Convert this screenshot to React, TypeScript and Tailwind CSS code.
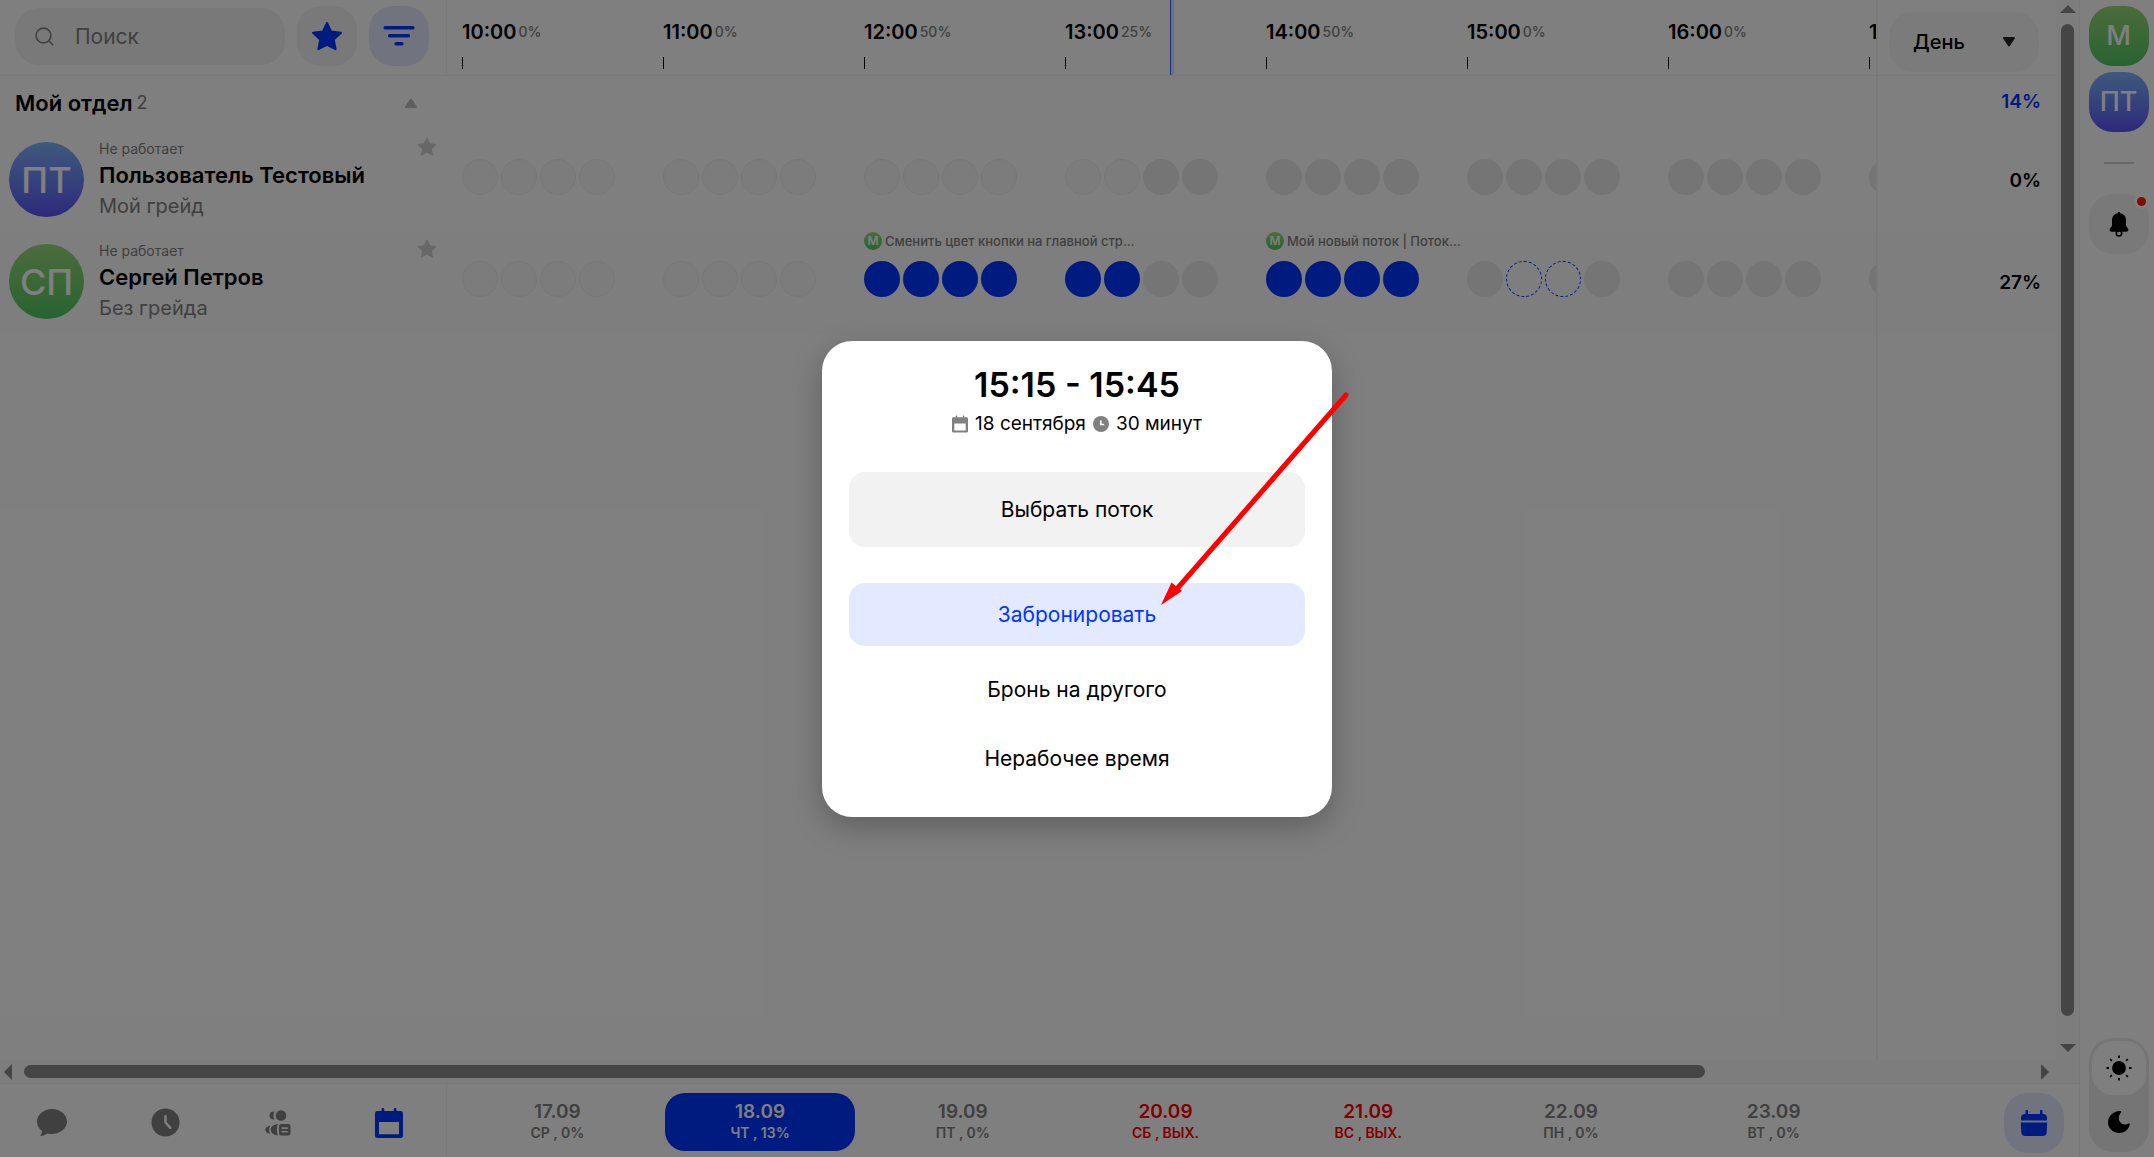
import clsx from 'clsx';
import type { ReactNode } from 'react';

type Cell = 'past' | 'free' | 'busy' | 'picked';

interface Hour {
  time: string;
  load: string;
}

interface Booking {
  hour: number;
  title: string;
}

interface Person {
  initials: string;
  name: string;
  grade: string;
  load: string;
  avatar: string;
  cells: Cell[][];
  bookings: Booking[];
}

const HOURS: Hour[] = [
  { time: '10:00', load: '0%' },
  { time: '11:00', load: '0%' },
  { time: '12:00', load: '50%' },
  { time: '13:00', load: '25%' },
  { time: '14:00', load: '50%' },
  { time: '15:00', load: '0%' },
  { time: '16:00', load: '0%' },
  { time: '17:00', load: '0%' },
];

const PAST: Cell[] = ['past', 'past', 'past', 'past'];
const FREE: Cell[] = ['free', 'free', 'free', 'free'];
const BUSY: Cell[] = ['busy', 'busy', 'busy', 'busy'];

const BLUE_AVATAR = 'bg-linear-to-b from-[#7eb3fb] to-[#5d50f5]';
const GREEN_AVATAR = 'bg-linear-to-b from-[#97d877] to-[#4bc763]';

const PEOPLE: Person[] = [
  {
    initials: 'ПТ',
    name: 'Пользователь Тестовый',
    grade: 'Мой грейд',
    load: '0%',
    avatar: BLUE_AVATAR,
    cells: [PAST, PAST, PAST, ['past', 'past', 'free', 'free'], FREE, FREE, FREE, FREE],
    bookings: [],
  },
  {
    initials: 'СП',
    name: 'Сергей Петров',
    grade: 'Без грейда',
    load: '27%',
    avatar: GREEN_AVATAR,
    cells: [PAST, PAST, BUSY, ['busy', 'busy', 'free', 'free'], BUSY, ['free', 'picked', 'picked', 'free'], FREE, FREE],
    bookings: [
      { hour: 2, title: 'Сменить цвет кнопки на главной стр...' },
      { hour: 4, title: 'Мой новый поток | Поток...' },
    ],
  },
];

const DAYS = [
  { date: '17.09', info: 'СР , 0%' },
  { date: '18.09', info: 'ЧТ , 13%', current: true },
  { date: '19.09', info: 'ПТ , 0%' },
  { date: '20.09', info: 'СБ , ВЫХ.', off: true },
  { date: '21.09', info: 'ВС , ВЫХ.', off: true },
  { date: '22.09', info: 'ПН , 0%' },
  { date: '23.09', info: 'ВТ , 0%' },
];

/* Icons */

function StarIcon({ className }: { className?: string }) {
  return (
    <svg viewBox="0 0 32 30" className={className} fill="currentColor" aria-hidden="true">
      <path
        d="M16 2l4.2 8.6 9.8 1.2-7.200 6.800 1.800 9.600L16 23.800l-8.600 4.400 1.800-9.600-7.200-6.800 9.800-1.200z"
        stroke="currentColor"
        strokeWidth="2"
        strokeLinejoin="round"
      />
    </svg>
  );
}

function SearchIcon() {
  return (
    <svg viewBox="0 0 20 20" className="size-5" fill="none" stroke="currentColor" strokeWidth="1.6" strokeLinecap="round" aria-hidden="true">
      <circle cx="8.500" cy="8.500" r="7.400" />
      <path d="M13.800 13.800l4 4" />
    </svg>
  );
}

function FilterIcon() {
  return (
    <svg viewBox="0 0 32 20" className="h-5 w-8" fill="currentColor" aria-hidden="true">
      <rect x="0.5" y="0" width="31" height="3.4" rx="1.5" />
      <rect x="5" y="8" width="22" height="3.4" rx="1.5" />
      <rect x="11.5" y="16" width="9" height="3.4" rx="1.5" />
    </svg>
  );
}

function CalendarIcon({ className }: { className?: string }) {
  return (
    <svg viewBox="0 0 28 30" className={className} fill="currentColor" fillRule="evenodd" aria-hidden="true">
      <path d="M2.500 3h4V1.400a1.400 1.400 0 0 1 2.800 0V3h9.400V1.400a1.400 1.400 0 0 1 2.800 0V3h4A2.500 2.500 0 0 1 28 5.500v22a2.500 2.500 0 0 1-2.500 2.500h-23A2.500 2.500 0 0 1 0 27.500v-22A2.500 2.500 0 0 1 2.500 3zM4 14v12.200h20V14z" />
    </svg>
  );
}

function SolidCalendarIcon() {
  return (
    <svg viewBox="0 0 28 26" className="h-[26px] w-7" fill="currentColor" aria-hidden="true">
      <path d="M1 10.500V8a4 4 0 0 1 4-4h.5V1a1 1 0 0 1 2.500 0v3h12V1a1 1 0 0 1 2.500 0v3h.5a4 4 0 0 1 4 4v2.500z" />
      <path d="M.8 12.500h26.400L26.700 22a4 4 0 0 1-4 4H5.300a4 4 0 0 1-4-4z" />
    </svg>
  );
}

function ClockIcon({ className }: { className?: string }) {
  return (
    <svg viewBox="0 0 30 30" className={className} aria-hidden="true">
      <circle cx="15" cy="15" r="14.500" fill="currentColor" />
      <path d="M15 8.500V15l5 5.500" fill="none" stroke="white" strokeWidth="2.600" strokeLinecap="round" strokeLinejoin="round" />
    </svg>
  );
}

function SmallClockIcon() {
  return (
    <svg viewBox="0 0 16 16" className="size-4" aria-hidden="true">
      <circle cx="8" cy="8" r="8" fill="currentColor" />
      <path d="M7.800 4.500v4h3.400" fill="none" stroke="white" strokeWidth="1.600" />
    </svg>
  );
}

function ChatIcon() {
  return (
    <svg viewBox="0 0 30 27" className="h-[27px] w-[30px]" fill="currentColor" aria-hidden="true">
      <path d="M15 0c8.300 0 15 5.600 15 12.500S23.300 25 15 25c-1.700 0-3.300-.2-4.800-.6-1.800 1.500-4.400 2.500-7.200 2.400 1.300-1.200 2-2.900 1.900-4.800C1.900 19.700 0 16.300 0 12.500 0 5.600 6.700 0 15 0z" />
    </svg>
  );
}

function TeamIcon() {
  return (
    <svg viewBox="0 0 26 26" className="size-[26px]" fill="currentColor" aria-hidden="true">
      <circle cx="16" cy="5.500" r="5.300" />
      <path d="M9.600 1.800a4 4 0 1 0 0 7.600 7 7 0 0 1 0-7.600z" />
      <path d="M13 14c-4.500.4-7.300 2.700-7.300 5.700s2.800 5.300 7.300 5.700c-.8-1.500-1-3.300-1-5.700s.2-4.200 1-5.700z" />
      <path d="M5.500 15.800C2.300 16 .3 17.600.3 19.700s2 3.700 5.200 4c-2-2.400-2-5.500 0-7.900z" />
      <path fillRule="evenodd" d="M16.500 14H23a2.500 2.500 0 0 1 2.500 2.500V23a2.500 2.500 0 0 1-2.500 2.500h-6.500A2.500 2.500 0 0 1 14 23v-6.500a2.500 2.500 0 0 1 2.500-2.500zm.2 3.300v1.600h6v-1.600zm0 3.700v1.600h6V21z" />
    </svg>
  );
}

function BellIcon() {
  return (
    <svg viewBox="0 0 20 25" className="h-[25px] w-5" fill="currentColor" aria-hidden="true">
      <path d="M10 0c.7 0 1.100.5 1.200 1.300C14.800 1.900 17 4.500 17 8.500v4.800c0 .8.400 1.400 1.200 2.200 1.700 1.700 1.800 4.200-1.200 4.200H3c-3 0-2.900-2.500-1.200-4.200.8-.8 1.200-1.400 1.200-2.200V8.500c0-4 2.200-6.600 5.800-7.200C8.900.5 9.300 0 10 0z" />
      <circle cx="10" cy="21.300" r="2.700" fill="none" stroke="currentColor" strokeWidth="1.600" />
    </svg>
  );
}

function SunIcon() {
  return (
    <svg viewBox="0 0 26 26" className="size-[26px]" fill="currentColor" stroke="currentColor" strokeWidth="1.800" aria-hidden="true">
      <circle cx="13" cy="13" r="6" />
      <path d="M13 .5v2.500M13 23v2.500M.5 13H3M23 13h2.500M4.200 4.200l1.700 1.700M20.100 20.100l1.700 1.700M4.200 21.800l1.700-1.700M20.100 5.900l1.700-1.700" />
    </svg>
  );
}

function MoonIcon() {
  return (
    <svg viewBox="0 0 24 24" className="size-6" fill="currentColor" aria-hidden="true">
      <path d="M13.400 1C7 .8 1 5.800 1 12.300 1 18.300 6 23 12 23c5.200 0 9.600-3.600 10.800-8.600.2-.9-.6-1.300-1.300-.8-4.600 2.900-9.900-.9-9.700-5.800.1-2 1-3.800 2.200-5.200.5-.6.300-1.500-.6-1.600z" />
    </svg>
  );
}

function Triangle({ className }: { className?: string }) {
  return (
    <svg viewBox="0 0 12 10" className={className} fill="currentColor" stroke="currentColor" strokeWidth="2" strokeLinejoin="round" aria-hidden="true">
      <path d="M6 1.500L11 9H1z" />
    </svg>
  );
}

function ScrollArrow({ className }: { className?: string }) {
  return (
    <svg viewBox="0 0 16 8" className={clsx('h-2 w-4 text-[#8b8b8b]', className)} fill="currentColor" aria-hidden="true">
      <path d="M8 0l8 8H0z" />
    </svg>
  );
}

/* Schedule */

const CELL_STYLE: Record<Cell, string> = {
  past: 'bg-[#f8f8f8] border border-[#f0f0f0]',
  free: 'bg-[#ebebeb]',
  busy: 'bg-[#0036ff]',
  picked: 'border border-dashed border-[#0036ff]',
};

function TopBar() {
  return (
    <header className="flex h-[76px] shrink-0 border-b border-[#f2f2f2]">
      <div className="flex w-[447px] shrink-0 items-start gap-3 border-r border-[#f2f2f2] pt-[6px] pl-[15px]">
        <label className="mt-0.5 flex h-[57px] w-[270px] items-center gap-5 rounded-3xl bg-[#f2f2f2] pl-5 text-[#808080]">
          <SearchIcon />
          <input
            type="text"
            placeholder="Поиск"
            aria-label="Поиск"
            className="w-[180px] bg-transparent text-[21px] outline-none placeholder:text-[#808080]"
          />
        </label>
        <button aria-label="Избранное" className="flex size-[60px] items-center justify-center rounded-3xl bg-[#f2f2f2] text-[#0036ff]">
          <StarIcon className="h-[30px] w-8" />
        </button>
        <button aria-label="Фильтр" className="flex size-[60px] items-center justify-center rounded-3xl bg-[#e3e9ff] text-[#0036ff]">
          <FilterIcon />
        </button>
      </div>
      <div className="relative flex min-w-0 flex-1 overflow-hidden pl-[15px]">
        {HOURS.map((hour) => (
          <div key={hour.time} className="flex w-[201px] shrink-0 flex-col justify-between pt-4 pb-[6px]">
            <div className="flex h-8 items-center gap-0.5">
              <span className="text-xl font-semibold">{hour.time}</span>
              <span className="text-sm font-medium text-[#808080]">{hour.load}</span>
            </div>
            <div className="h-3 w-px bg-black" />
          </div>
        ))}
        {/* current time */}
        <div className="absolute inset-y-0 left-[723px] w-1 border-l border-[#3d66ff] bg-[#dbe3ff]" />
      </div>
      <div className="w-[180px] shrink-0 border-l-2 border-[#f2f2f2] pt-3 pl-[11px]">
        <div className="relative flex w-[150px] items-center">
          <select aria-label="Период" className="h-[60px] w-full appearance-none rounded-3xl bg-[#f7f7f7] pl-6 text-xl font-medium">
            <option>День</option>
          </select>
          <Triangle className="pointer-events-none absolute right-6 h-[10px] w-3 rotate-180 text-[#222]" />
        </div>
      </div>
    </header>
  );
}

function PersonRow({ person }: { person: Person }) {
  return (
    <div className="flex h-[102px] even:bg-white odd:bg-[#fcfcfc]">
      <div className="flex w-[447px] shrink-0 gap-[15px] pt-3 pr-[10px] pl-[9px]">
        <div className={clsx('flex size-[75px] shrink-0 items-center justify-center rounded-full text-4xl font-medium text-white', person.avatar)}>
          {person.initials}
        </div>
        <div className="flex-1">
          <p className="-mt-1 text-sm leading-[22px] text-[#808080]">Не работает</p>
          <p className="text-[22px] leading-[30px] font-semibold">{person.name}</p>
          <p className="text-xl leading-[32px] text-[#808080]">{person.grade}</p>
        </div>
        <button aria-label="В избранное" className="-mt-[6px] h-5 text-[#cfcfcf]">
          <StarIcon className="h-[19px] w-5" />
        </button>
      </div>
      <div className="flex min-w-0 flex-1 overflow-hidden pl-[15px]">
        {person.cells.map((cells, hour) => {
          const booking = person.bookings.find((b) => b.hour === hour);
          return (
            <div key={hour} className="w-[201px] shrink-0">
              <div className="flex h-[29px] items-start gap-[3px]">
                {booking && (
                  <>
                    <span className={clsx('flex size-[18px] shrink-0 items-center justify-center rounded-full text-xs font-semibold text-white', GREEN_AVATAR)}>
                      М
                    </span>
                    <span className="text-[13px] leading-[18px] font-medium whitespace-nowrap text-[#808080]">{booking.title}</span>
                  </>
                )}
              </div>
              <div className="flex gap-[3px]">
                {cells.map((cell, i) => (
                  <button key={i} aria-label="Слот" className={clsx('size-9 rounded-full', CELL_STYLE[cell])} />
                ))}
              </div>
            </div>
          );
        })}
      </div>
      <div className="flex w-[180px] shrink-0 items-center justify-end border-l-2 border-[#f2f2f2] pr-[15px] text-[19px] font-semibold">
        {person.load}
      </div>
    </div>
  );
}

function Schedule() {
  return (
    <div className="flex min-h-0 flex-1 flex-col">
      <div className="flex h-[54px] shrink-0">
        <div className="flex w-[447px] shrink-0 items-center gap-1 pr-[30px] pl-[15px]">
          <h2 className="text-[22px] font-semibold">Мой отдел</h2>
          <span className="text-lg text-[#808080]">2</span>
          <button aria-label="Свернуть" className="ml-auto text-[#bdbdbd]">
            <Triangle className="h-[10px] w-3" />
          </button>
        </div>
        <div className="flex-1" />
        <div className="flex w-[180px] items-center justify-end border-l-2 border-[#f2f2f2] pr-[15px] pb-0.5 text-[19px] font-semibold text-[#0036ff]">14%</div>
      </div>
      {PEOPLE.map((person) => (
        <PersonRow key={person.name} person={person} />
      ))}
      <div className="ml-auto w-[180px] flex-1 border-l-2 border-[#f2f2f2]" />
    </div>
  );
}

function VerticalScroll() {
  return (
    <div className="flex w-[23px] shrink-0 flex-col items-center bg-[#fafafa] pt-[5px] pb-2">
      <ScrollArrow />
      <div className="mt-[11px] mb-[28px] w-[13px] flex-1 rounded-full bg-[#8b8b8b]" />
      <ScrollArrow className="rotate-180" />
    </div>
  );
}

function HorizontalScroll() {
  return (
    <div className="flex h-[23px] shrink-0 items-center bg-[#fafafa] pr-[26px]">
      <ScrollArrow className="-rotate-90" />
      <div className="ml-2 flex h-[13px] flex-1">
        <div className="w-[83.5%] rounded-full bg-[#8b8b8b]" />
      </div>
      <ScrollArrow className="rotate-90" />
    </div>
  );
}

/* Bottom bar */

function NavLink({ label, active, children }: { label: string; active?: boolean; children: ReactNode }) {
  return (
    <a href="#" aria-label={label} className={active ? 'text-[#0036ff]' : 'text-[#808080]'}>
      {children}
    </a>
  );
}

function BottomBar() {
  return (
    <footer className="flex h-[74px] shrink-0 border-t border-[#f2f2f2]">
      <nav className="flex w-[447px] shrink-0 items-center justify-between border-r border-[#f2f2f2] pt-1 pr-[43px] pl-[37px]">
        <NavLink label="Чаты"><ChatIcon /></NavLink>
        <NavLink label="Время"><ClockIcon className="size-[29px]" /></NavLink>
        <NavLink label="Команда"><TeamIcon /></NavLink>
        <NavLink label="Календарь" active><CalendarIcon className="h-[30px] w-7" /></NavLink>
      </nav>
      <div className="flex min-w-0 flex-1 items-start pt-[9px] pr-[129px] pl-[9px]">
        {DAYS.map((day) => (
          <div key={day.date} className="flex flex-1 justify-center">
            <button
              className={clsx(
                'flex h-[58px] w-[190px] flex-col items-center justify-center rounded-[20px]',
                day.current && 'bg-[#0036ff] text-white',
                day.off && 'text-[#ff0000]',
                !day.current && !day.off && 'text-[#808080]',
              )}
            >
              <span className="text-[19px] leading-[22px] font-semibold">{day.date}</span>
              <span className="text-sm leading-5 font-semibold">{day.info}</span>
            </button>
          </div>
        ))}
      </div>
      <div className="shrink-0 pt-[9px] pr-[15px]">
        <button aria-label="Сегодня" className="flex size-[60px] items-center justify-center rounded-3xl bg-[#e3e9ff] text-[#0036ff]">
          <SolidCalendarIcon />
        </button>
      </div>
    </footer>
  );
}

function SideBar() {
  return (
    <aside className="flex w-[75px] shrink-0 flex-col items-center border-l border-[#f2f2f2] pt-[6px] pr-px pb-[5px] pl-1">
      <button className={clsx('mb-[6px] size-[60px] rounded-3xl text-[27px] font-medium text-white', GREEN_AVATAR)}>М</button>
      <button className={clsx('size-[60px] rounded-3xl text-[27px] font-medium text-white', BLUE_AVATAR)}>ПТ</button>
      <div className="my-[30px] h-0.5 w-[30px] bg-[#cfcfcf]" />
      <button aria-label="Уведомления" className="relative flex size-[60px] items-center justify-center rounded-3xl bg-[#f2f2f2]">
        <BellIcon />
        <span className="absolute top-0 right-0 size-[15px] rounded-full border-[3px] border-white bg-[#ff1a00]" />
      </button>
      <div className="mt-auto flex w-[60px] flex-col items-center rounded-3xl bg-[#ebebeb] p-[3px]">
        <button aria-label="Светлая тема" className="flex size-[54px] items-center justify-center rounded-[21px] bg-white">
          <SunIcon />
        </button>
        <button aria-label="Тёмная тема" className="flex size-[54px] items-center justify-center">
          <MoonIcon />
        </button>
      </div>
    </aside>
  );
}

/* Dialog */

function SlotDialog() {
  return (
    <div role="dialog" aria-modal="true" aria-labelledby="slot-title" className="relative w-[510px] rounded-[30px] bg-white px-[27px] pt-[23px] pb-[27px] text-center shadow-[0_10px_30px_rgba(0,0,0,0.25)]">
      <h1 id="slot-title" className="text-[34px] leading-[42px] font-semibold">15:15 - 15:45</h1>
      <div className="mt-[3px] flex items-center justify-center gap-[7px] text-[19px] leading-[30px]">
        <CalendarIcon className="h-[18px] w-4 text-[#808080]" />
        <span>18 сентября</span>
        <span className="text-[#808080]"><SmallClockIcon /></span>
        <span>30 минут</span>
      </div>
      <div className="mt-[33px] flex flex-col text-[21px]">
        <button className="mb-9 h-[75px] rounded-2xl bg-[#f2f2f2] pt-0.5">Выбрать поток</button>
        <button className="mb-3 h-[63px] rounded-2xl bg-[#e3e9ff] pt-0.5 text-[#0036ff]">Забронировать</button>
        <button className="mb-[6px] h-[63px] rounded-2xl pt-0.5">Бронь на другого</button>
        <button className="h-[63px] rounded-2xl pt-0.5">Нерабочее время</button>
      </div>
      {/* pointer to the booking button */}
      <svg viewBox="0 0 192 218" className="pointer-events-none absolute top-[50px] left-[337px] h-[218px] w-48" aria-hidden="true">
        <path d="M187 4L17 199" stroke="#ff0000" strokeWidth="5" strokeLinecap="round" />
        <path d="M2 214L12.500 191.500 23 200z" fill="#ff0000" />
      </svg>
    </div>
  );
}

export default function App() {
  return (
    <div className="relative flex h-screen overflow-hidden bg-white font-['Inter',sans-serif] text-black">
      <div className="flex min-w-0 flex-1 flex-col">
        <div className="flex min-h-0 flex-1">
          <main className="flex min-w-0 flex-1 flex-col">
            <TopBar />
            <Schedule />
          </main>
          <VerticalScroll />
        </div>
        <HorizontalScroll />
        <BottomBar />
      </div>
      <SideBar />
      <div className="absolute inset-0 flex items-center justify-center bg-black/50">
        <SlotDialog />
      </div>
    </div>
  );
}
